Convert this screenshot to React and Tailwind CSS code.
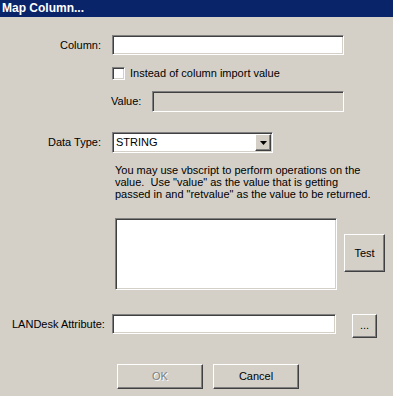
export default function App() {
  const sunken =
    "border border-t-[#808080] border-l-[#808080] border-b-white border-r-white shadow-[inset_1px_1px_0_#404040,inset_-1px_-1px_0_#d4d0c8]";
  const raised =
    "border border-t-white border-l-white border-b-[#404040] border-r-[#404040] shadow-[inset_-1px_-1px_0_#808080,inset_1px_1px_0_#d4d0c8] bg-[#d4d0c8]";

  return (
    <div className="w-[393px] h-[396px] bg-[#d4d0c8] text-[11px] text-black font-['Liberation_Sans',Arial,sans-serif] overflow-hidden">
      {/* title bar */}
      <div className="h-[17px] bg-[#0a246a] text-white font-bold text-[12px] leading-[17px] pl-[2px]">
        Map Column...
      </div>

      {/* column */}
      <div className="flex items-center mt-[18px] h-[20px]">
        <div className="w-[101px] text-right">Column:</div>
        <div className={`ml-[11px] w-[232px] h-[20px] bg-white ${sunken}`} />
      </div>

      {/* checkbox */}
      <div className="flex items-center mt-[12px] ml-[112px] h-[13px]">
        <div className={`w-[13px] h-[13px] bg-white ${sunken}`} />
        <span className="ml-[5px]">Instead of column import value</span>
      </div>

      {/* value */}
      <div className="flex items-center mt-[11px] ml-[111px] h-[21px]">
        <span className="w-[41px]">Value:</span>
        <div className={`w-[192px] h-[21px] bg-[#d4d0c8] ${sunken}`} />
      </div>

      {/* data type */}
      <div className="flex items-center mt-[20px] h-[21px]">
        <div className="w-[101px] text-right">Data Type:</div>
        <div className={`ml-[11px] w-[161px] h-[21px] bg-white flex items-center ${sunken}`}>
          <span className="flex-1 pl-[3px] leading-none">STRING</span>
          <div className={`w-[16px] h-[17px] mr-[1px] flex items-center justify-center ${raised}`}>
            <svg width="7" height="4" viewBox="0 0 7 4">
              <path d="M0 0h7L3.5 4z" fill="#000" />
            </svg>
          </div>
        </div>
      </div>

      {/* help text */}
      <p className="mt-[11px] ml-[115px] leading-[12px] whitespace-nowrap">
        You may use vbscript to perform operations on the
        <br />
        value.&nbsp; Use "value" as the value that is getting
        <br />
        passed in and "retvalue" as the value to be returned.
      </p>

      {/* script + test */}
      <div className="flex items-start mt-[18px] ml-[115px]">
        <div className={`w-[222px] h-[72px] bg-white ${sunken}`} />
        <button className={`ml-[7px] mt-[16px] w-[41px] h-[38px] ${raised}`}>Test</button>
      </div>

      {/* landesk attribute */}
      <div className="flex items-start mt-[24px]">
        <div className="w-[101px] text-right h-[20px] leading-[20px] pl-[12px] whitespace-nowrap">
          LANDesk Attribute:
        </div>
        <div className={`ml-[11px] w-[224px] h-[20px] bg-white ${sunken}`} />
        <button className={`ml-[16px] w-[25px] h-[24px] leading-none pb-[2px] ${raised}`}>...</button>
      </div>

      {/* buttons */}
      <div className="flex mt-[26px] ml-[117px] gap-[10px]">
        <button className={`w-[86px] h-[25px] text-[#808080] [text-shadow:1px_1px_0_#fff] ${raised}`}>OK</button>
        <button className={`w-[86px] h-[25px] ${raised}`}>Cancel</button>
      </div>
    </div>
  );
}
